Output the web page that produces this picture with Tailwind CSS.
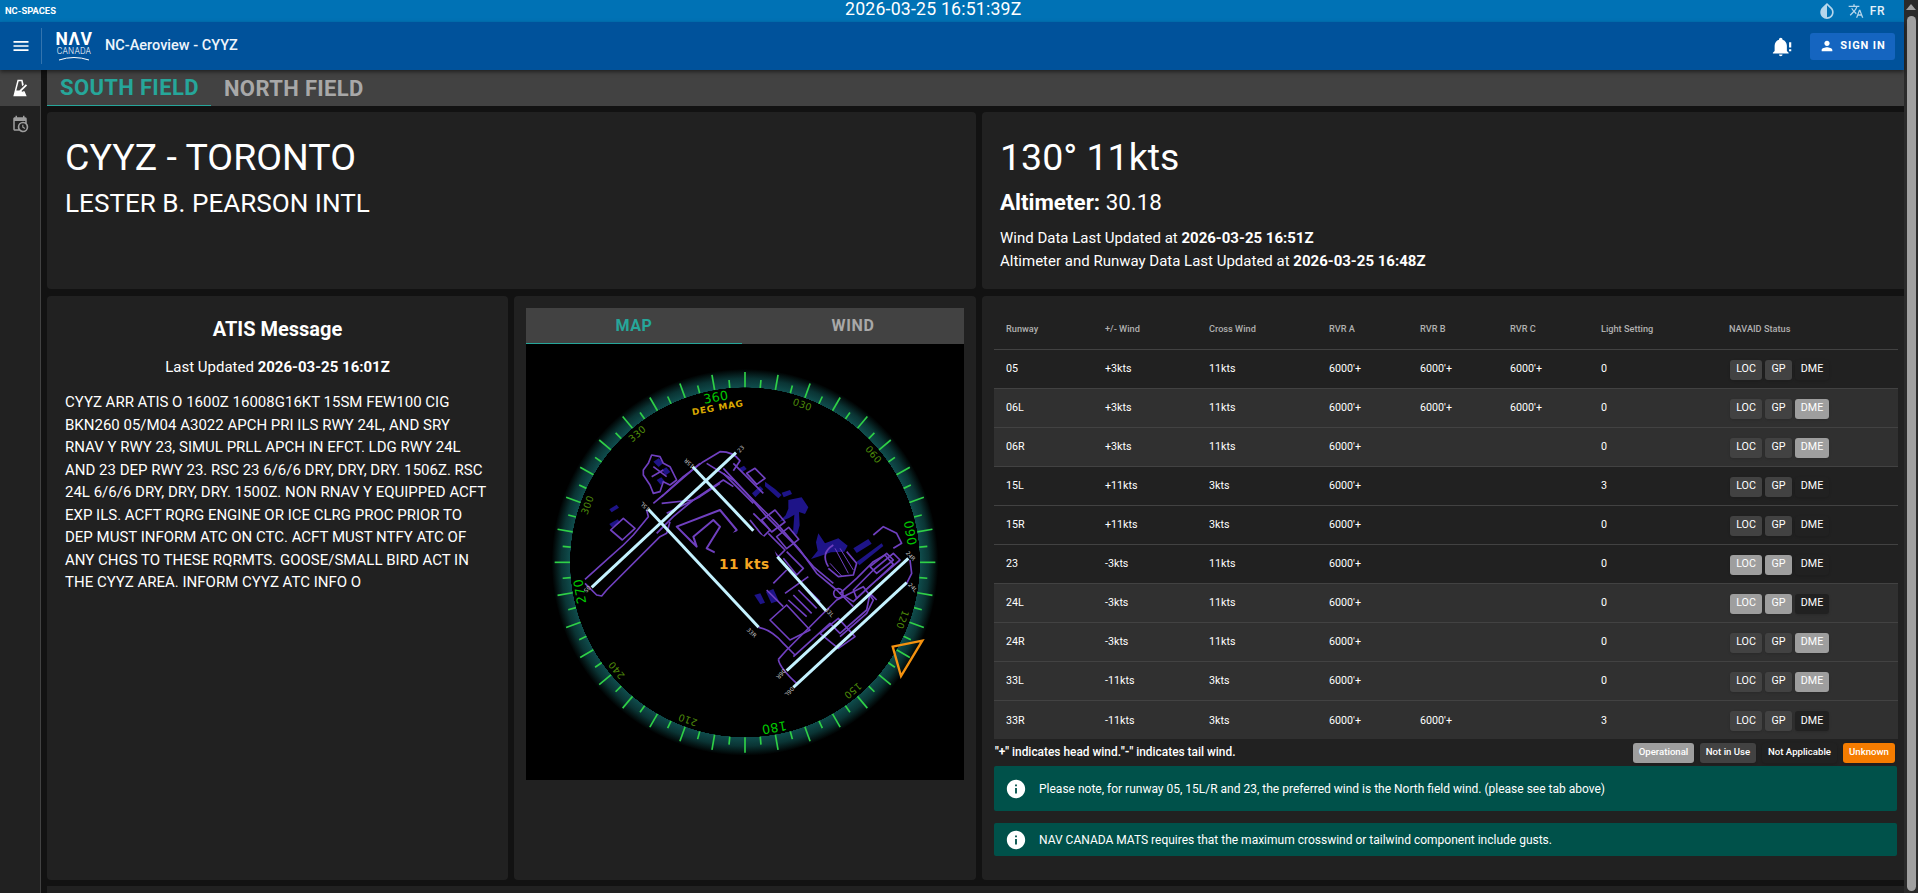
<!DOCTYPE html>
<html lang="en">
<head>
    <meta charset="UTF-8">
    <title>NC-Aeroview - CYYZ</title>
    <script src="https://cdn.jsdelivr.net/npm/@tailwindcss/browser@4"></script>
</head>
<body class="bg-[#121212] text-white overflow-hidden font-['Roboto',sans-serif]">
<div class="flex h-[893px] w-[1918px]">
    <div class="flex-1 flex flex-col min-w-0">
        <!-- top strip -->
        <div class="h-[22px] bg-[#0072b5] relative flex items-center pl-[5px] pr-[19px] justify-between">
            <span class="text-[9.4px] font-bold">NC-SPACES</span>
            <span class="absolute left-[845px] top-0 text-[17.7px] leading-[18px] tracking-[0.2px]">2026-03-25 16:51:39Z</span>
            <div class="flex items-center gap-[11px]">
                <svg class="w-[20px] h-[20px] -scale-x-100" viewBox="0 0 24 24" fill="#b5d6ec"><path fill-rule="evenodd" d="M17.66 7.93 12 2.27 6.34 7.93c-3.12 3.12-3.12 8.19 0 11.31C7.9 20.8 9.95 21.58 12 21.58c2.05 0 4.1-.78 5.66-2.34 3.12-3.12 3.12-8.19 0-11.31zM12 19.59c-1.6 0-3.11-.62-4.24-1.76C6.62 16.69 6 15.19 6 13.59s.62-3.11 1.76-4.24L12 5.1v14.49z"/></svg>
                <div class="flex items-center gap-[6px]">
                    <svg class="w-[16px] h-[16px]" viewBox="0 0 24 24" fill="#b5d6ec"><path d="M12.87 15.07l-2.54-2.51.03-.03c1.74-1.94 2.98-4.17 3.71-6.53H17V4h-7V2H8v2H1v1.99h11.17C11.5 7.92 10.4 9.75 9 11.3 8.09 10.29 7.34 9.18 6.75 8h-2c.73 1.63 1.73 3.17 2.98 4.56l-5.09 5.02L4 19l5-5 3.11 3.11.76-2.04zM18.5 10h-2L12 22h2l1.12-3h4.75L21 22h2l-4.5-12zm-2.62 7l1.62-4.33L19.12 17h-3.24z"/></svg>
                    <span class="text-[12px] font-medium tracking-[0.5px] text-[#e3f0f8]">FR</span>
                </div>
            </div>
        </div>
        <!-- header -->
        <div class="h-[48px] bg-[#00529b] flex items-center shadow-[0_2px_4px_rgba(0,0,0,0.5)] relative z-10">
            <div class="w-[41px] flex justify-center">
                <svg class="w-[20px] h-[20px]" viewBox="0 0 24 24" fill="#fff"><path d="M3 18h18v-2H3v2zm0-5h18v-2H3v2zm0-7v2h18V6H3z"/></svg>
            </div>
            <div class="w-px h-[36px] bg-white/20"></div>
            <div class="ml-[13px] w-[38px] flex flex-col items-center">
                <span class="text-[17.5px] leading-[15px] font-bold tracking-[0.6px]">NΛV</span>
                <span class="text-[8.5px] leading-[9px] font-light tracking-[0.2px]">CANADA</span>
                <svg class="w-[32px] h-[5px]" viewBox="0 0 32 5"><path d="M1 4 Q16 -1 31 4" stroke="#fff" stroke-width="1" fill="none"/></svg>
            </div>
            <span class="ml-[12px] text-[14.5px] font-medium text-[#eef5fb]">NC-Aeroview - CYYZ</span>
            <div class="ml-auto flex items-center mr-[9px]">
                <svg class="w-[21px] h-[21px] mr-[17px]" viewBox="0 0 24 24" fill="#fff"><path d="M8 21H12C12 22.1 11.1 23 10 23S8 22.1 8 21M19 20H1V19L3 17V11C3 7.9 5 5.2 8 4.3V4C8 2.9 8.9 2 10 2S12 2.9 12 4V4.3C15 5.2 17 7.9 17 11V17L19 19ZM19.5 7H22V13H19.5ZM19.5 15H22V17.5H19.5Z"/></svg>
                <div class="w-[85px] h-[27px] rounded-[3px] bg-[#1565c0] flex items-center justify-center gap-[5px] text-[11px] font-bold tracking-[0.9px]">
                    <svg class="w-[16px] h-[16px]" viewBox="0 0 24 24" fill="#fff"><path d="M12 12c2.21 0 4-1.79 4-4s-1.79-4-4-4-4 1.79-4 4 1.79 4 4 4zm0 2c-2.67 0-8 1.34-8 4v2h16v-2c0-2.66-5.33-4-8-4z"/></svg>
                    SIGN IN
                </div>
            </div>
        </div>
        <div class="flex-1 flex min-h-0">
            <!-- side nav -->
            <div class="w-[41px] bg-[#212121] border-r border-[#424242] flex flex-col">
                <div class="h-[36px] bg-[#424242] flex items-center justify-center">
                    <svg class="w-[20px] h-[20px]" viewBox="0 0 24 24" fill="#fff"><path fill-rule="evenodd" d="M9 2h6l1.5 6-2 2L13.6 4h-3.2L7.6 15h3.7L19 7.5l1.5 1.5L13.5 16h1l1 0L16 17.5 14.5 16h2.9L20 22H4Z"/></svg>
                </div>
                <div class="h-[36px] flex items-center justify-center">
                    <svg class="w-[18px] h-[18px]" viewBox="0 0 24 24" fill="#9e9e9e"><path d="M15,13H16.5V15.82L18.94,17.23L18.19,18.53L15,16.69V13M19,8H5V19H9.67C9.24,18.09 9,17.07 9,16A7,7 0 0,1 16,9C17.07,9 18.09,9.24 19,9.67V8M5,21C3.89,21 3,20.1 3,19V5C3,3.89 3.89,3 5,3H6V1H8V3H16V1H18V3H19A2,2 0 0,1 21,5V11.1C22.24,12.36 23,14.09 23,16A7,7 0 0,1 16,23C14.09,23 12.36,22.24 11.1,21H5M16,11.15A4.85,4.85 0 0,0 11.15,16C11.15,18.68 13.32,20.85 16,20.85A4.85,4.85 0 0,0 20.85,16C20.85,13.32 18.68,11.15 16,11.15Z"/></svg>
                </div>
            </div>
            <div class="flex-1 flex flex-col min-w-0 pl-[6px]">
                <!-- field tabs -->
                <div class="h-[36px] bg-[#424242] flex text-[22px] font-bold tracking-[0.35px] shrink-0">
                    <div class="w-[164px] pl-[13px] flex items-center text-[#26a69a] border-b border-[#26a69a] whitespace-nowrap">SOUTH FIELD</div>
                    <div class="pl-[13px] flex items-center text-[#a8a8a8]">NORTH FIELD</div>
                </div>
                <!-- airport + wind -->
                <div class="flex gap-[6px] mt-[6px] h-[177px] shrink-0">
                    <div class="w-[929px] bg-[#212121] rounded-[4px] pl-[18px] pt-[23px]">
                        <div class="text-[37.5px] leading-[44px]">CYYZ - TORONTO</div>
                        <div class="text-[26.1px] leading-[30px] mt-[9px]">LESTER B. PEARSON INTL</div>
                    </div>
                    <div class="w-[922px] bg-[#212121] rounded-l-[4px] pl-[18px] pt-[23px]">
                        <div class="text-[37.5px] leading-[44px]">130° 11kts</div>
                        <div class="text-[22.4px] leading-[26px] mt-[10px]"><span class="font-bold">Altimeter:</span> 30.18</div>
                        <div class="text-[15px] leading-[23px] mt-[12px]">
                            <div>Wind Data Last Updated at <b>2026-03-25 16:51Z</b></div>
                            <div>Altimeter and Runway Data Last Updated at <b>2026-03-25 16:48Z</b></div>
                        </div>
                    </div>
                </div>
                <div class="flex gap-[6px] mt-[7px] h-[584px] shrink-0">
                    <!-- ATIS -->
                    <div class="w-[461px] bg-[#212121] rounded-[4px] px-[18px] pt-[21px]">
                        <div class="text-[20px] leading-[24px] font-bold text-center">ATIS Message</div>
                        <div class="text-[15px] leading-[20px] text-center mt-[16px]">Last Updated <b>2026-03-25 16:01Z</b></div>
                        <div class="text-[15px] leading-[22.5px] mt-[14px]">CYYZ ARR ATIS O 1600Z 16008G16KT 15SM FEW100 CIG BKN260 05/M04 A3022 APCH PRI ILS RWY 24L, AND SRY RNAV Y RWY 23, SIMUL PRLL APCH IN EFCT. LDG RWY 24L AND 23 DEP RWY 23. RSC 23 6/6/6 DRY, DRY, DRY. 1506Z. RSC 24L 6/6/6 DRY, DRY, DRY. 1500Z. NON RNAV Y EQUIPPED ACFT EXP ILS. ACFT RQRG ENGINE OR ICE CLRG PROC PRIOR TO DEP MUST INFORM ATC ON CTC. ACFT MUST NTFY ATC OF ANY CHGS TO THESE RQRMTS. GOOSE/SMALL BIRD ACT IN THE CYYZ AREA. INFORM CYYZ ATC INFO O</div>
                    </div>
                    <!-- map -->
                    <div class="w-[462px] bg-[#212121] rounded-[4px] px-[12px] pt-[12px]">
                        <div class="h-[36px] bg-[#424242] flex text-[16px] font-bold tracking-[0.6px]">
                            <div class="w-[216px] flex items-center justify-center text-[#26a69a] border-b border-[#26a69a]">MAP</div>
                            <div class="flex-1 flex items-center justify-center text-[#a8a8a8]">WIND</div>
                        </div>
                        <svg id="compass" class="block w-[438px] h-[436px] bg-black" viewBox="18 132 1314 1308">
                            <defs>
                                <radialGradient id="ring" gradientUnits="userSpaceOnUse" cx="675" cy="787" r="580">
                                    <stop offset="0.904" stop-color="#000"/>
                                    <stop offset="0.905" stop-color="#0f4c4c"/>
                                    <stop offset="0.95" stop-color="#0a3434"/>
                                    <stop offset="1" stop-color="#000"/>
                                </radialGradient>
                            </defs>
                            <circle cx="675" cy="787" r="580" fill="url(#ring)"/>
                            <g id="ticks" stroke="#2fd047" stroke-width="5"></g>
                            <!-- taxiways -->
                            <g fill="#1e1488">
                                <path d="M268 628l22-14 7 9-22 14z"/><path d="M268 672l25-14 8 10-25 14z"/>
                                <path d="M658 505l14-8 8 10-14 10z"/><path d="M696 580l24-22 10 10-24 24z"/>
                                <path d="M735 545l30 22 20 18-10 10-40-36z"/><path d="M785 578l25-8 6 12-25 10z"/>
                                <path d="M805 600l40-8 20 30-10 20-18-6 2 40-8 28-12-5 4-55-16 10-30 12 20-20 8-20z"/>
                                <path d="M895 700l20 30 40-15 28 22-10 18-40 2-30 10-30 10 20-25-5-25z"/>
                                <path d="M1000 745l45-28 10 14-45 28z"/><path d="M1010 785l75-55 5 8-72 58z"/>
                                <path d="M703 885l18-5 14 28-14 5z"/><path d="M738 875l22-8 16 35-22 8z"/>
                                <path d="M400 485l16-10 14 14-14 12z"/><path d="M425 510l14-8 12 14-14 10z"/>
                                <path d="M410 540l14-8 10 12-12 10z"/>
                            </g>
                            <g fill="none" stroke="#7040c0" stroke-width="5" stroke-linejoin="round">
                                <path d="M195 838L265 775L310 735L340 705L385 650L380 630"/>
                                <path d="M195 850L230 885L245 888L260 870L420 710L440 700L450 665"/>
                                <path d="M272 690l38-35 35 30-38 35z"/>
                                <path d="M400 610L430 585L490 530L550 485L600 455Q640 455 660 482L640 512"/>
                                <path d="M425 610L520 600L610 540L640 560"/>
                                <path d="M440 640L540 590L600 550"/>
                                <path d="M425 590L540 490M410 700L460 650L520 600"/>
                                <path d="M470 680L600 630L650 690L590 760L560 745L600 680L580 660L520 710L530 740L510 720Z" stroke-width="6"/>
                                <path d="M560 490L640 540L700 600L770 670L840 750L890 820L950 870L1000 920"/>
                                <path d="M610 505L680 580L740 650L820 730L880 800L940 850"/>
                                <path d="M640 490L730 580M610 520L700 610"/>
                                <path d="M725 660l40-30 30 36-40 30zM770 710l36-28 30 36-36 28z"/>
                                <path d="M700 640L750 690L730 710L690 660M745 700L795 750L775 770L735 720M800 755L850 805L830 825L790 775"/>
                                <path d="M680 520l25-15 30 30-25 18z"/>
                                <path d="M716 982Q755 990 790 1030L825 1065"/>
                                <path d="M750 960l50-45 70 75-60 30z"/>
                                <path d="M795 880l70-50M805 900l55 50M820 885l55 55M835 870l55 55M850 855l50 50M760 850L800 810M740 870L790 920"/>
                                <path d="M775 1078L800 1050L950 900L1030 860L1060 900L1040 940L960 1010"/>
                                <path d="M775 1078Q780 1105 830 1150L850 1135L930 1060"/>
                                <path d="M820 1070L930 970L960 1000L1040 930L1050 880L1070 900"/>
                                <path d="M900 1000l55-45 50 55-50 35z"/>
                                <path d="M960 880l50-45 50-50 35-20 25 28-40 38-40 36-40 38z"/>
                                <path d="M1000 870L1060 810L1120 760L1140 780L1070 840L1010 895ZM1050 800L1100 760L1120 780L1070 820Z"/>
                                <path d="M1060 705L1090 680L1130 700L1145 730L1120 745"/>
                                <path d="M1170 780L1175 820L1160 850"/>
                                <circle cx="955" cy="880" r="14"/>
                                <path d="M925 800Q900 760 940 735M925 805L955 830L1000 825L1010 790L980 755"/>
                                <path d="M945 745L985 820M960 745L1000 810M930 790L965 828" stroke-width="3"/>
                                <path d="M370 510L385 490L395 465L420 470L430 490L450 500L470 540L450 555L430 545L420 575L400 580L390 555L370 525Z"/>
                                <path d="M400 500L440 530M395 530L430 510"/>
                            </g>
                            <circle cx="675" cy="787" r="96" fill="#000"/>
                            <!-- runways -->
                            <g stroke="#c4f2ff" stroke-width="9">
                                <line x1="215" y1="862" x2="648" y2="458"/>
                                <line x1="518" y1="500" x2="700" y2="692"/>
                                <line x1="772" y1="770" x2="918" y2="932"/>
                                <line x1="385" y1="628" x2="716" y2="982"/>
                                <line x1="800" y1="1112" x2="1165" y2="775"/>
                                <line x1="820" y1="1162" x2="1160" y2="848"/>
                            </g>
                            <g fill="#c8c8c8" font-size="17" text-anchor="middle" font-family="'DejaVu Sans',sans-serif">
                                <text transform="translate(662 447) rotate(-47)" y="6">23</text>
                                <text transform="translate(202 867) rotate(133)" y="6">05</text>
                                <text transform="translate(507 490) rotate(-137)" y="6">15R</text>
                                <text transform="translate(375 620) rotate(-137)" y="6">15L</text>
                                <text transform="translate(928 937) rotate(47)" y="6">33L</text>
                                <text transform="translate(695 998) rotate(43)" y="6">33R</text>
                                <text transform="translate(783 1122) rotate(133)" y="6">06R</text>
                                <text transform="translate(808 1175) rotate(133)" y="6">06L</text>
                                <text transform="translate(1172 768) rotate(47)" y="6">24R</text>
                                <text transform="translate(1178 862) rotate(47)" y="6">24L</text>
                            </g>
                            <!-- compass labels -->
                            <g transform="rotate(-10 675 787)" text-anchor="middle" font-family="'DejaVu Sans',sans-serif">
                                <g fill="#00c800" font-size="38" letter-spacing="1">
                                    <text x="675" y="297">360</text>
                                    <text x="675" y="297" transform="rotate(90 675 787)">090</text>
                                    <text x="675" y="297" transform="rotate(180 675 787)">180</text>
                                    <text x="675" y="297" transform="rotate(270 675 787)">270</text>
                                </g>
                                <g fill="#4d8a0a" font-size="29" letter-spacing="1">
                                    <text x="675" y="294" transform="rotate(30 675 787)">030</text>
                                    <text x="675" y="294" transform="rotate(60 675 787)">060</text>
                                    <text x="675" y="294" transform="rotate(120 675 787)">120</text>
                                    <text x="675" y="294" transform="rotate(150 675 787)">150</text>
                                    <text x="675" y="294" transform="rotate(210 675 787)">210</text>
                                    <text x="675" y="294" transform="rotate(240 675 787)">240</text>
                                    <text x="675" y="294" transform="rotate(300 675 787)">300</text>
                                    <text x="675" y="294" transform="rotate(330 675 787)">330</text>
                                </g>
                                <text x="675" y="325" fill="#d9a800" font-size="27" font-weight="bold" letter-spacing="2">DEG MAG</text>
                            </g>
                            <text x="673" y="806" fill="#f5a623" font-size="41" font-weight="bold" text-anchor="middle" letter-spacing="1.5" font-family="'DejaVu Sans',sans-serif">11 kts</text>
                            <path d="M1118 1040L1207 1022L1143 1128Z" fill="none" stroke="#f5920f" stroke-width="7"/>
                        </svg>
                    </div>
                    <!-- runway table -->
                    <div class="w-[922px] bg-[#212121] rounded-l-[4px] pl-[12px] pr-[6px] pt-[13px]">
                        <table class="table-fixed w-[904px] text-[10.7px] text-left border-collapse [&_td]:pt-[2px]">
                            <colgroup>
                                <col class="w-[99px]"><col class="w-[104px]"><col class="w-[120px]"><col class="w-[91px]"><col class="w-[90px]"><col class="w-[91px]"><col class="w-[128px]"><col>
                            </colgroup>
                            <thead>
                                <tr class="h-[40px] border-b border-[#424242] text-[9.2px] text-[#b0b0b0]">
                                    <th class="pl-[12px] font-medium">Runway</th><th class="pl-[12px] font-medium">+/- Wind</th><th class="pl-[12px] font-medium">Cross Wind</th><th class="pl-[12px] font-medium">RVR A</th><th class="pl-[12px] font-medium">RVR B</th><th class="pl-[12px] font-medium">RVR C</th><th class="pl-[12px] font-medium">Light Setting</th><th class="pl-[12px] font-medium">NAVAID Status</th>
                                </tr>
                            </thead>
                            <tbody>
                                <tr class="h-[39px] border-b border-[#424242]">
                                    <td class="pl-[12px]">05</td><td class="pl-[12px]">+3kts</td><td class="pl-[12px]">11kts</td><td class="pl-[12px]">6000'+</td><td class="pl-[12px]">6000'+</td><td class="pl-[12px]">6000'+</td><td class="pl-[12px]">0</td>
                                    <td class="pl-[13px]"><div class="flex gap-[3px]"><span class="w-[32px] h-[20px] rounded-[3px] bg-[#424242] flex items-center justify-center shadow">LOC</span><span class="w-[27px] h-[20px] rounded-[3px] bg-[#424242] flex items-center justify-center shadow">GP</span><span class="w-[34px] h-[20px] rounded-[3px] bg-[#212121] flex items-center justify-center shadow">DME</span></div></td>
                                </tr>
                                <tr class="h-[39px] border-b border-[#424242] bg-[#303030]">
                                    <td class="pl-[12px]">06L</td><td class="pl-[12px]">+3kts</td><td class="pl-[12px]">11kts</td><td class="pl-[12px]">6000'+</td><td class="pl-[12px]">6000'+</td><td class="pl-[12px]">6000'+</td><td class="pl-[12px]">0</td>
                                    <td class="pl-[13px]"><div class="flex gap-[3px]"><span class="w-[32px] h-[20px] rounded-[3px] bg-[#424242] flex items-center justify-center shadow">LOC</span><span class="w-[27px] h-[20px] rounded-[3px] bg-[#424242] flex items-center justify-center shadow">GP</span><span class="w-[34px] h-[20px] rounded-[3px] bg-[#9e9e9e] flex items-center justify-center shadow">DME</span></div></td>
                                </tr>
                                <tr class="h-[39px] border-b border-[#424242] bg-[#303030]">
                                    <td class="pl-[12px]">06R</td><td class="pl-[12px]">+3kts</td><td class="pl-[12px]">11kts</td><td class="pl-[12px]">6000'+</td><td class="pl-[12px]"></td><td class="pl-[12px]"></td><td class="pl-[12px]">0</td>
                                    <td class="pl-[13px]"><div class="flex gap-[3px]"><span class="w-[32px] h-[20px] rounded-[3px] bg-[#424242] flex items-center justify-center shadow">LOC</span><span class="w-[27px] h-[20px] rounded-[3px] bg-[#424242] flex items-center justify-center shadow">GP</span><span class="w-[34px] h-[20px] rounded-[3px] bg-[#9e9e9e] flex items-center justify-center shadow">DME</span></div></td>
                                </tr>
                                <tr class="h-[39px] border-b border-[#424242]">
                                    <td class="pl-[12px]">15L</td><td class="pl-[12px]">+11kts</td><td class="pl-[12px]">3kts</td><td class="pl-[12px]">6000'+</td><td class="pl-[12px]"></td><td class="pl-[12px]"></td><td class="pl-[12px]">3</td>
                                    <td class="pl-[13px]"><div class="flex gap-[3px]"><span class="w-[32px] h-[20px] rounded-[3px] bg-[#424242] flex items-center justify-center shadow">LOC</span><span class="w-[27px] h-[20px] rounded-[3px] bg-[#424242] flex items-center justify-center shadow">GP</span><span class="w-[34px] h-[20px] rounded-[3px] bg-[#212121] flex items-center justify-center shadow">DME</span></div></td>
                                </tr>
                                <tr class="h-[39px] border-b border-[#424242]">
                                    <td class="pl-[12px]">15R</td><td class="pl-[12px]">+11kts</td><td class="pl-[12px]">3kts</td><td class="pl-[12px]">6000'+</td><td class="pl-[12px]"></td><td class="pl-[12px]"></td><td class="pl-[12px]">0</td>
                                    <td class="pl-[13px]"><div class="flex gap-[3px]"><span class="w-[32px] h-[20px] rounded-[3px] bg-[#424242] flex items-center justify-center shadow">LOC</span><span class="w-[27px] h-[20px] rounded-[3px] bg-[#424242] flex items-center justify-center shadow">GP</span><span class="w-[34px] h-[20px] rounded-[3px] bg-[#212121] flex items-center justify-center shadow">DME</span></div></td>
                                </tr>
                                <tr class="h-[39px] border-b border-[#424242]">
                                    <td class="pl-[12px]">23</td><td class="pl-[12px]">-3kts</td><td class="pl-[12px]">11kts</td><td class="pl-[12px]">6000'+</td><td class="pl-[12px]"></td><td class="pl-[12px]"></td><td class="pl-[12px]">0</td>
                                    <td class="pl-[13px]"><div class="flex gap-[3px]"><span class="w-[32px] h-[20px] rounded-[3px] bg-[#9e9e9e] flex items-center justify-center shadow">LOC</span><span class="w-[27px] h-[20px] rounded-[3px] bg-[#9e9e9e] flex items-center justify-center shadow">GP</span><span class="w-[34px] h-[20px] rounded-[3px] bg-[#212121] flex items-center justify-center shadow">DME</span></div></td>
                                </tr>
                                <tr class="h-[39px] border-b border-[#424242] bg-[#303030]">
                                    <td class="pl-[12px]">24L</td><td class="pl-[12px]">-3kts</td><td class="pl-[12px]">11kts</td><td class="pl-[12px]">6000'+</td><td class="pl-[12px]"></td><td class="pl-[12px]"></td><td class="pl-[12px]">0</td>
                                    <td class="pl-[13px]"><div class="flex gap-[3px]"><span class="w-[32px] h-[20px] rounded-[3px] bg-[#9e9e9e] flex items-center justify-center shadow">LOC</span><span class="w-[27px] h-[20px] rounded-[3px] bg-[#9e9e9e] flex items-center justify-center shadow">GP</span><span class="w-[34px] h-[20px] rounded-[3px] bg-[#212121] flex items-center justify-center shadow">DME</span></div></td>
                                </tr>
                                <tr class="h-[39px] border-b border-[#424242] bg-[#303030]">
                                    <td class="pl-[12px]">24R</td><td class="pl-[12px]">-3kts</td><td class="pl-[12px]">11kts</td><td class="pl-[12px]">6000'+</td><td class="pl-[12px]"></td><td class="pl-[12px]"></td><td class="pl-[12px]">0</td>
                                    <td class="pl-[13px]"><div class="flex gap-[3px]"><span class="w-[32px] h-[20px] rounded-[3px] bg-[#424242] flex items-center justify-center shadow">LOC</span><span class="w-[27px] h-[20px] rounded-[3px] bg-[#424242] flex items-center justify-center shadow">GP</span><span class="w-[34px] h-[20px] rounded-[3px] bg-[#9e9e9e] flex items-center justify-center shadow">DME</span></div></td>
                                </tr>
                                <tr class="h-[39px] border-b border-[#424242] bg-[#303030]">
                                    <td class="pl-[12px]">33L</td><td class="pl-[12px]">-11kts</td><td class="pl-[12px]">3kts</td><td class="pl-[12px]">6000'+</td><td class="pl-[12px]"></td><td class="pl-[12px]"></td><td class="pl-[12px]">0</td>
                                    <td class="pl-[13px]"><div class="flex gap-[3px]"><span class="w-[32px] h-[20px] rounded-[3px] bg-[#424242] flex items-center justify-center shadow">LOC</span><span class="w-[27px] h-[20px] rounded-[3px] bg-[#424242] flex items-center justify-center shadow">GP</span><span class="w-[34px] h-[20px] rounded-[3px] bg-[#9e9e9e] flex items-center justify-center shadow">DME</span></div></td>
                                </tr>
                                <tr class="h-[39px] bg-[#303030]">
                                    <td class="pl-[12px]">33R</td><td class="pl-[12px]">-11kts</td><td class="pl-[12px]">3kts</td><td class="pl-[12px]">6000'+</td><td class="pl-[12px]">6000'+</td><td class="pl-[12px]"></td><td class="pl-[12px]">3</td>
                                    <td class="pl-[13px]"><div class="flex gap-[3px]"><span class="w-[32px] h-[20px] rounded-[3px] bg-[#424242] flex items-center justify-center shadow">LOC</span><span class="w-[27px] h-[20px] rounded-[3px] bg-[#424242] flex items-center justify-center shadow">GP</span><span class="w-[34px] h-[20px] rounded-[3px] bg-[#212121] flex items-center justify-center shadow">DME</span></div></td>
                                </tr>
                            </tbody>
                        </table>
                        <div class="h-[27px] flex items-center justify-between pl-[1px] pr-[3px] w-[904px]">
                            <span class="text-[11.9px] font-medium"><b>"+"</b> indicates head wind.<b>"-"</b> indicates tail wind.</span>
                            <div class="flex gap-[6px] text-[9.6px] font-medium">
                                <span class="w-[61px] h-[20px] rounded-[3px] bg-[#9e9e9e] flex items-center justify-center shadow">Operational</span>
                                <span class="w-[56px] h-[20px] rounded-[3px] bg-[#424242] flex items-center justify-center shadow">Not in Use</span>
                                <span class="w-[75px] h-[20px] rounded-[3px] bg-[#212121] flex items-center justify-center shadow">Not Applicable</span>
                                <span class="w-[52px] h-[20px] rounded-[3px] bg-[#f57c00] flex items-center justify-center shadow">Unknown</span>
                            </div>
                        </div>
                        <div class="h-[45px] w-[903px] rounded-[2px] bg-[#00514a] flex items-center pl-[11px] text-[12px]">
                            <svg class="w-[22px] h-[22px] mr-[12px]" viewBox="0 0 24 24" fill="#fff"><path d="M12 2C6.48 2 2 6.48 2 12s4.48 10 10 10 10-4.48 10-10S17.52 2 12 2zm1 15h-2v-6h2v6zm0-8h-2V7h2v2z"/></svg>
                            Please note, for runway 05, 15L/R and 23, the preferred wind is the North field wind. (please see tab above)
                        </div>
                        <div class="h-[33px] w-[903px] rounded-[2px] bg-[#00514a] flex items-center pl-[11px] mt-[12px] text-[12px]">
                            <svg class="w-[22px] h-[22px] mr-[12px]" viewBox="0 0 24 24" fill="#fff"><path d="M12 2C6.48 2 2 6.48 2 12s4.48 10 10 10 10-4.48 10-10S17.52 2 12 2zm1 15h-2v-6h2v6zm0-8h-2V7h2v2z"/></svg>
                            NAV CANADA MATS requires that the maximum crosswind or tailwind component include gusts.
                        </div>
                    </div>
                </div>
                <div class="mt-[6px] flex-1 bg-[#212121]"></div>
            </div>
        </div>
    </div>
    <!-- scrollbar -->
    <div class="w-[14px] bg-[#2b2b2b] flex flex-col items-center pt-[4px]">
        <div class="w-0 h-0 border-x-[5px] border-x-transparent border-b-[6px] border-b-[#a0a0a0]"></div>
        <div class="w-[9px] flex-1 mt-[6px] mb-[2px] rounded-[5px] bg-[#a0a0a0]"></div>
    </div>
</div>
<script>
    // compass ticks, one every 5 degrees
    const ticks = document.getElementById('ticks');
    for (let a = 0; a < 360; a += 5) {
        const l = document.createElementNS('http://www.w3.org/2000/svg', 'line');
        l.setAttribute('x1', 675);
        l.setAttribute('x2', 675);
        l.setAttribute('y1', a % 10 == 0 ? 216 : 238);
        l.setAttribute('y2', 262);
        l.setAttribute('transform', 'rotate(' + a + ' 675 787)');
        ticks.appendChild(l);
    }
</script>
</body>
</html>
